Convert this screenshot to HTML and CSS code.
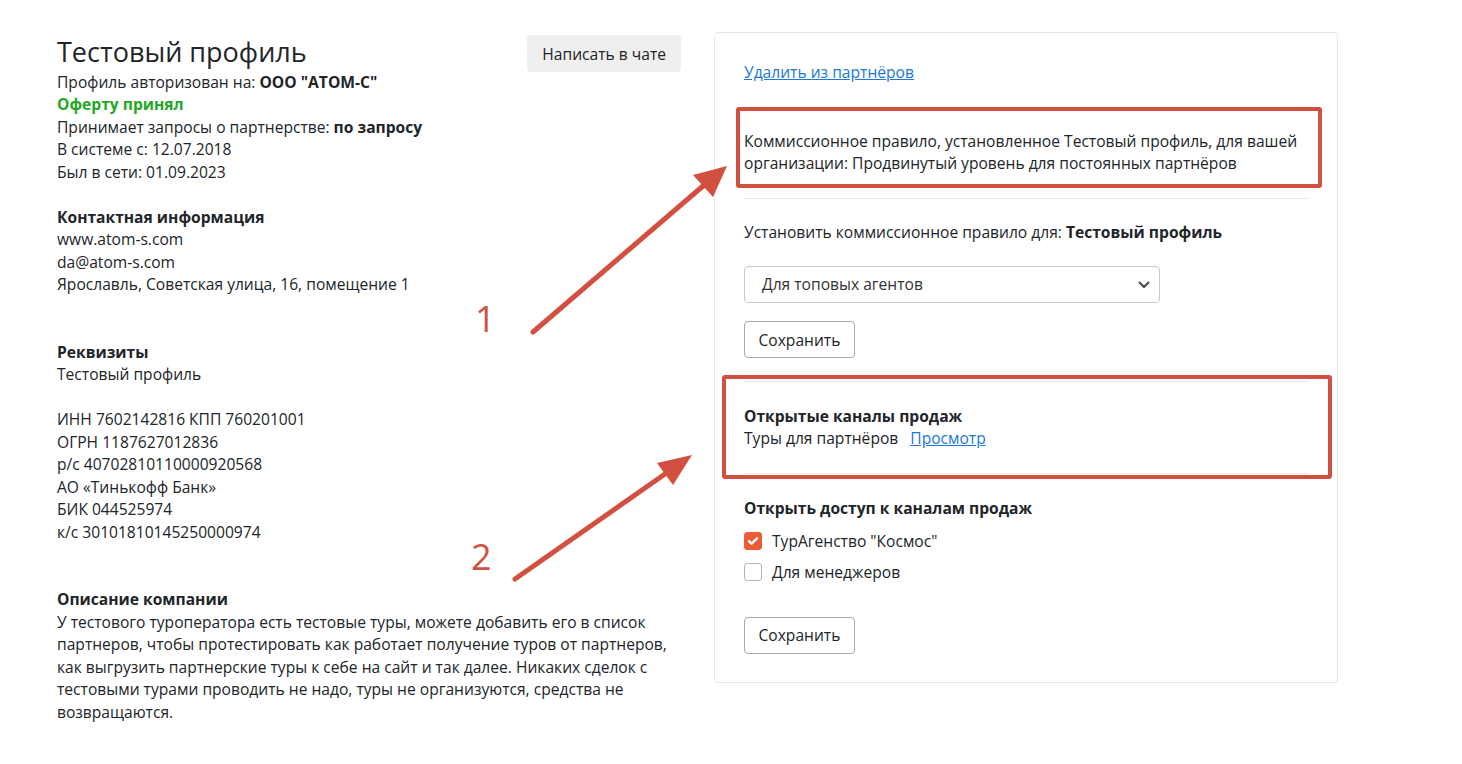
FILE: index.html
```html
<!DOCTYPE html>
<html lang="ru">
<head>
  <meta charset="UTF-8">
  <title>Тестовый профиль</title>
  <link rel="stylesheet" href="styles.css">
</head>
<body>
<div class="page">
  <div class="profile">
    <div class="profile-head">
      <div>
        <h1 class="title">Тестовый профиль</h1>
        <div>Профиль авторизован на: <b>ООО "АТОМ-С"</b></div>
        <div class="accepted">Оферту принял</div>
        <div>Принимает запросы о партнерстве: <b>по запросу</b></div>
        <div>В системе с: 12.07.2018</div>
        <div>Был в сети: 01.09.2023</div>
      </div>
      <button class="btn btn-grey">Написать в чате</button>
    </div>

    <div class="section">
      <div class="section-title">Контактная информация</div>
      <div>www.atom-s.com</div>
      <div>da@atom-s.com</div>
      <div>Ярославль, Советская улица, 16, помещение 1</div>
    </div>

    <div class="section section-wide">
      <div class="section-title">Реквизиты</div>
      <div>Тестовый профиль</div>
      <br>
      <div>ИНН 7602142816 КПП 760201001</div>
      <div>ОГРН 1187627012836</div>
      <div>р/с 40702810110000920568</div>
      <div>АО «Тинькофф Банк»</div>
      <div>БИК 044525974</div>
      <div>к/с 30101810145250000974</div>
    </div>

    <div class="section section-wide">
      <div class="section-title">Описание компании</div>
      <div>У тестового туроператора есть тестовые туры, можете добавить его в список партнеров, чтобы протестировать как работает получение туров от партнеров, как выгрузить партнерские туры к себе на сайт и так далее. Никаких сделок с тестовыми турами проводить не надо, туры не организуются, средства не возвращаются.</div>
    </div>
  </div>

  <div class="panel">
    <a class="link" href="#">Удалить из партнёров</a>

    <div class="rule-note">Коммиссионное правило, установленное Тестовый профиль, для вашей организации: Продвинутый уровень для постоянных партнёров</div>
    <hr class="line">

    <div class="rule-set">Установить коммиссионное правило для: <b>Тестовый профиль</b></div>
    <div class="select">
      <span>Для топовых агентов</span>
      <svg width="12" height="8" viewBox="0 0 12 8"><path d="M1.5 1.5 6 6l4.5-4.5" fill="none" stroke="#444" stroke-width="2" stroke-linecap="round" stroke-linejoin="round"/></svg>
    </div>
    <button class="btn btn-white btn-save">Сохранить</button>
    <hr class="line line-low">

    <div class="channels">
      <div class="section-title">Открытые каналы продаж</div>
      <div>Туры для партнёров <a class="link link-view" href="#">Просмотр</a></div>
    </div>
    <hr class="line">

    <div class="access">
      <div class="section-title">Открыть доступ к каналам продаж</div>
      <label class="check-row">
        <span class="check check-on"><svg width="12" height="10" viewBox="0 0 12 10"><path d="M2 5.2 4.6 7.6 10 2.4" fill="none" stroke="#fff" stroke-width="2.4" stroke-linecap="round" stroke-linejoin="round"/></svg></span>
        ТурАгенство "Космос"
      </label>
      <label class="check-row">
        <span class="check"></span>
        Для менеджеров
      </label>
    </div>
    <button class="btn btn-white btn-save btn-last">Сохранить</button>
  </div>

  <!-- пометки поверх страницы -->
  <svg class="marks" width="1462" height="764" viewBox="0 0 1462 764">
    <g fill="none" stroke="#d1503f" stroke-width="4">
      <rect x="738" y="109" width="582" height="77" rx="1"/>
      <rect x="724" y="377" width="606" height="100" rx="1"/>
    </g>
    <g stroke="#d1503f" stroke-width="5" stroke-linecap="round">
      <line x1="533" y1="332" x2="703" y2="186"/>
      <line x1="515" y1="579" x2="665" y2="474"/>
    </g>
    <g fill="#d1503f">
      <polygon points="727,166 693,175 713,197"/>
      <polygon points="692,455 657,463 673,485"/>
      <text x="475" y="332" class="mark-num">1</text>
      <text x="471" y="570" class="mark-num">2</text>
    </g>
  </svg>
</div>
</body>
</html>
```

FILE: styles.css
```css
* {
  margin: 0;
  padding: 0;
  box-sizing: border-box;
}
body {
  font-family: "Open Sans", "Noto Sans", sans-serif;
  font-size: 15.6px;
  line-height: 22.5px;
  color: #212529;
  background: #fff;
}
b {
  font-weight: 700;
}
.page {
  position: relative;
  width: 1462px;
  min-height: 764px;
  display: flex;
  gap: 33px;
  padding: 32px 0 0 57px;
}

/* левая колонка */
.profile {
  width: 624px;
  padding-top: 1px;
}
.profile-head {
  display: flex;
  justify-content: space-between;
  align-items: flex-start;
}
.title {
  font-size: 27px;
  font-weight: 400;
  line-height: 31px;
  margin: 3px 0 3.5px;
}
.accepted {
  color: #1fa824;
  font-weight: 700;
}
.section {
  margin-top: 22.5px;
}
.section-wide {
  margin-top: 45px;
}
.section-title {
  font-weight: 700;
}

/* кнопки */
.btn {
  font-family: inherit;
  font-size: 15.6px;
  color: #212529;
  height: 37px;
  border-radius: 4px;
  cursor: pointer;
}
.btn-grey {
  margin-top: 2px;
  padding: 0 15px;
  background: #efefef;
  border: none;
}
.btn-white {
  background: #fff;
  border: 1px solid #a9a9ad;
  padding: 0 13.5px;
}

/* правая панель */
.panel {
  width: 624px;
  height: 651px;
  border: 1px solid #e6e6e6;
  border-radius: 4px;
  padding: 28px 29px 28px;
  display: flex;
  flex-direction: column;
  align-items: flex-start;
}
.link {
  color: #2178d4;
  text-decoration: underline;
}
.link-view {
  margin-left: 8px;
}
.rule-note {
  margin-top: 46px;
}
.line {
  align-self: stretch;
  width: 565px;
  border: none;
  border-top: 1px solid #e8e8e8;
  margin-top: 23.5px;
}
.line-low {
  margin-top: 22.5px;
}
.rule-set {
  margin-top: 21.5px;
}
.select {
  margin-top: 23px;
  width: 416px;
  height: 37px;
  border: 1px solid #c9c9cc;
  border-radius: 4px;
  padding: 0 9px 0 17px;
  display: flex;
  align-items: center;
  justify-content: space-between;
  color: #333;
}
.btn-save {
  margin-top: 18px;
}
.channels {
  margin-top: 23px;
}
.access {
  margin-top: 22.5px;
}
.check-row {
  display: flex;
  align-items: center;
  gap: 10px;
  margin-top: 8.5px;
}
.check-row:first-of-type {
  margin-top: 11px;
}
.check {
  width: 18px;
  height: 18px;
  border: 1px solid #b4b4b8;
  border-radius: 3px;
  display: flex;
  align-items: center;
  justify-content: center;
}
.check-on {
  background: #ea5d37;
  border-color: #ea5d37;
}
.btn-last {
  margin-top: 33px;
}

/* стрелки и рамки */
.marks {
  position: absolute;
  left: 0;
  top: 0;
  pointer-events: none;
}
.mark-num {
  font-family: "Open Sans", sans-serif;
  font-size: 36px;
  font-weight: 400;
}
```
